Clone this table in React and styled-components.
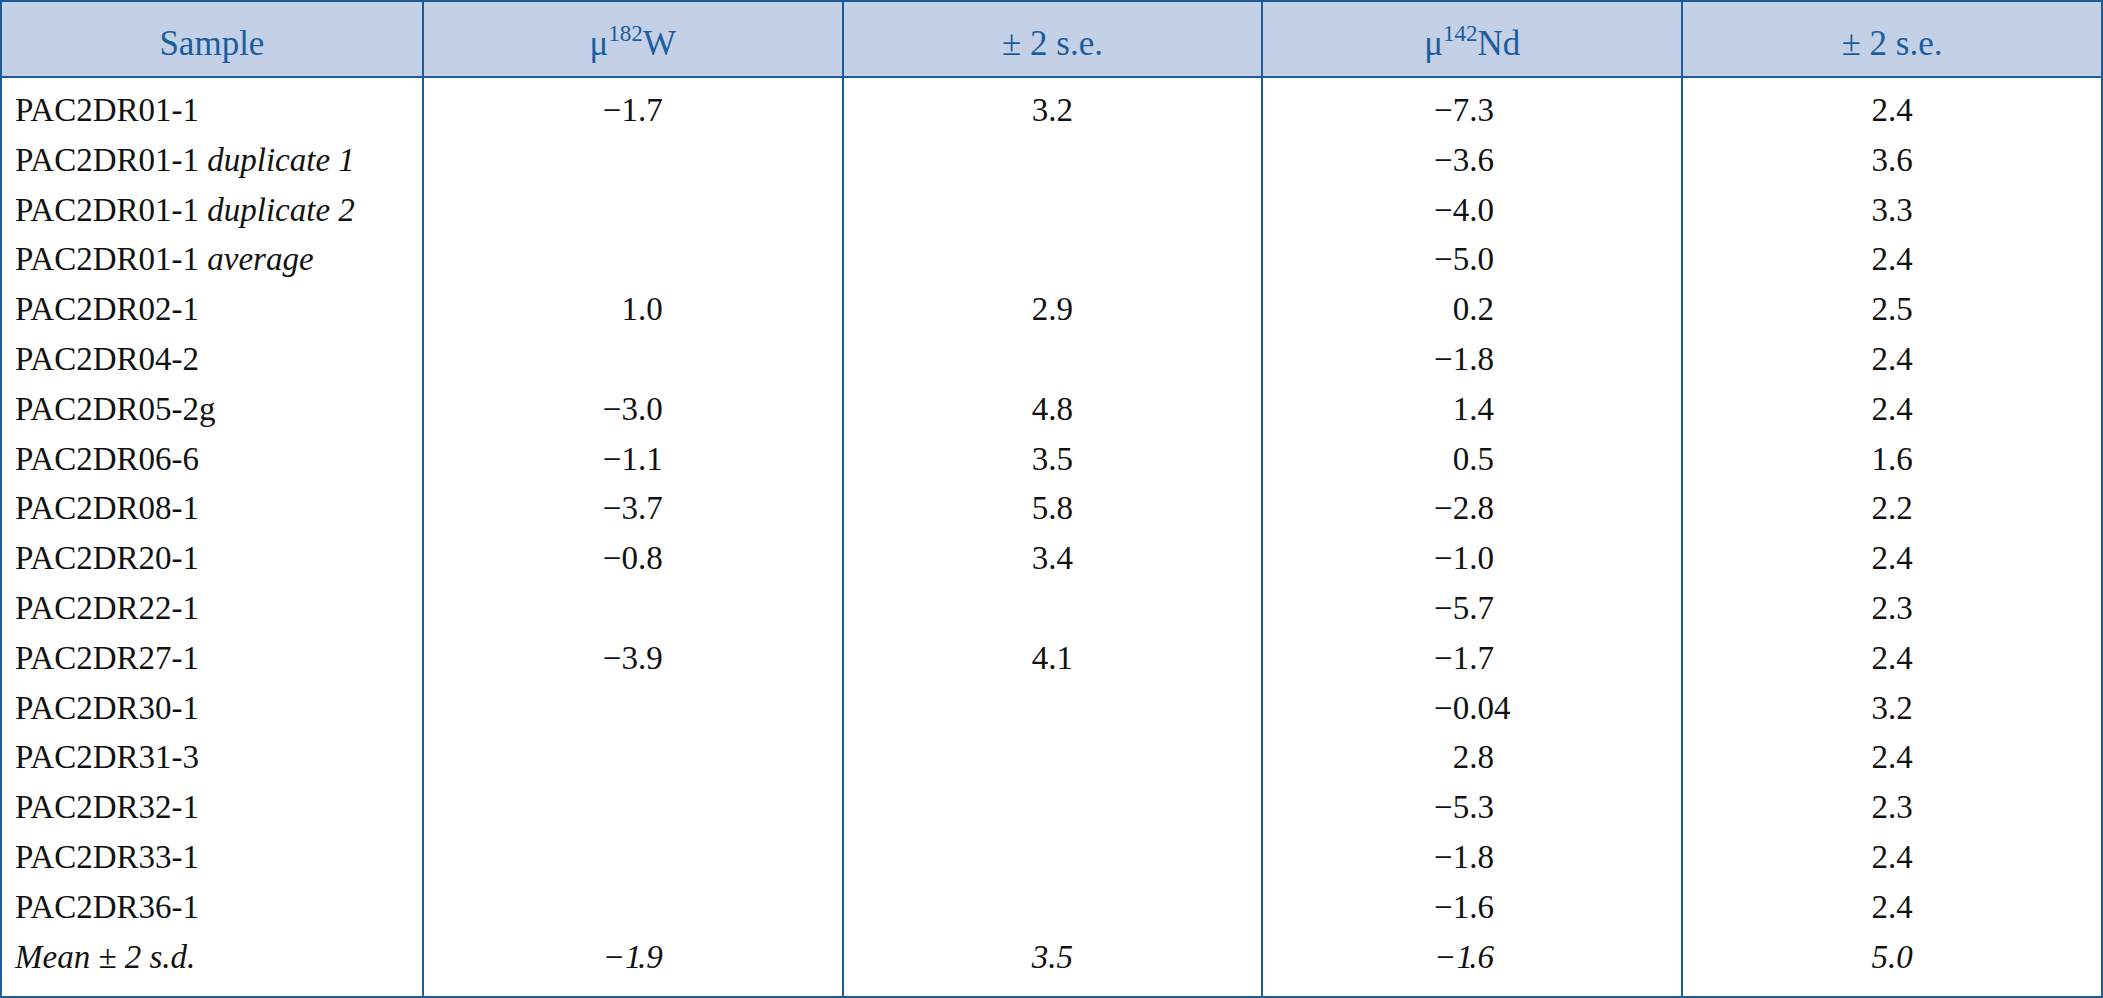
import React from "react";
import styled, { createGlobalStyle } from "styled-components";

const GlobalStyle = createGlobalStyle`
  html, body {
    margin: 0;
    padding: 0;
    background: #ffffff;
  }
  * {
    box-sizing: border-box;
  }
`;

// decimal-aligned columns: widths of the integer part and the fraction part (em)
const columns = [
  { key: "w", int: 1.064, frac: 0.75 },
  { key: "wse", int: 0.5, frac: 0.75 },
  { key: "nd", int: 1.064, frac: 1.25 },
  { key: "ndse", int: 0.5, frac: 0.75 },
];

const rows = [
  { name: "PAC2DR01-1", values: ["−1.7", "3.2", "−7.3", "2.4"] },
  { name: "PAC2DR01-1", note: "duplicate 1", values: ["", "", "−3.6", "3.6"] },
  { name: "PAC2DR01-1", note: "duplicate 2", values: ["", "", "−4.0", "3.3"] },
  { name: "PAC2DR01-1", note: "average", values: ["", "", "−5.0", "2.4"] },
  { name: "PAC2DR02-1", values: ["1.0", "2.9", "0.2", "2.5"] },
  { name: "PAC2DR04-2", values: ["", "", "−1.8", "2.4"] },
  { name: "PAC2DR05-2g", values: ["−3.0", "4.8", "1.4", "2.4"] },
  { name: "PAC2DR06-6", values: ["−1.1", "3.5", "0.5", "1.6"] },
  { name: "PAC2DR08-1", values: ["−3.7", "5.8", "−2.8", "2.2"] },
  { name: "PAC2DR20-1", values: ["−0.8", "3.4", "−1.0", "2.4"] },
  { name: "PAC2DR22-1", values: ["", "", "−5.7", "2.3"] },
  { name: "PAC2DR27-1", values: ["−3.9", "4.1", "−1.7", "2.4"] },
  { name: "PAC2DR30-1", values: ["", "", "−0.04", "3.2"] },
  { name: "PAC2DR31-3", values: ["", "", "2.8", "2.4"] },
  { name: "PAC2DR32-1", values: ["", "", "−5.3", "2.3"] },
  { name: "PAC2DR33-1", values: ["", "", "−1.8", "2.4"] },
  { name: "PAC2DR36-1", values: ["", "", "−1.6", "2.4"] },
  { name: "Mean ± 2 s.d.", mean: true, values: ["−1.9", "3.5", "−1.6", "5.0"] },
];

const Num = ({ value, col }) => {
  if (!value) return null;
  const dot = value.indexOf(".");
  return (
    <NumWrap>
      <IntPart $w={col.int}>{value.slice(0, dot)}</IntPart>
      <FracPart $w={col.frac}>{value.slice(dot)}</FracPart>
    </NumWrap>
  );
};

const App = () => {
  return (
    <>
      <GlobalStyle />
      <Table>
        <HeadRow>
          <HeadCell>Sample</HeadCell>
          <HeadCell>
            μ<Sup>182</Sup>W
          </HeadCell>
          <HeadCell>± 2 s.e.</HeadCell>
          <HeadCell>
            μ<Sup>142</Sup>Nd
          </HeadCell>
          <HeadCell>± 2 s.e.</HeadCell>
        </HeadRow>
        <Body>
          <Column>
            {rows.map((r, i) => (
              <NameCell key={i} $italic={r.mean}>
                {r.name}
                {r.note && <Note> {r.note}</Note>}
              </NameCell>
            ))}
          </Column>
          {columns.map((col, c) => (
            <Column key={col.key} $line>
              {rows.map((r, i) => (
                <ValueCell key={i} $italic={r.mean}>
                  <Num value={r.values[c]} col={col} />
                </ValueCell>
              ))}
            </Column>
          ))}
        </Body>
      </Table>
    </>
  );
};

export default App;

const Table = styled.div`
  width: 2103px;
  height: 998px;
  border: 2px solid #1d5b99;
  display: flex;
  flex-direction: column;
  font-family: "Liberation Serif", "Times New Roman", serif;
  color: #111;
`;

const HeadRow = styled.div`
  display: grid;
  grid-template-columns: repeat(5, 1fr);
  height: 76px;
  background: #c3d0e6;
  border-bottom: 2px solid #1d5b99;
`;

const HeadCell = styled.div`
  display: flex;
  align-items: center;
  justify-content: center;
  padding-top: 10px;
  font-size: 35px;
  color: #1b5d9d;
  border-left: 2px solid #1d5b99;

  &:first-child {
    border-left: none;
  }
`;

const Sup = styled.span`
  display: inline-block;
  font-size: 0.66em;
  line-height: 1;
  transform: translateY(-0.42em);
`;

const Body = styled.div`
  flex: 1;
  display: grid;
  grid-template-columns: repeat(5, 1fr);
`;

const Column = styled.div`
  display: flex;
  flex-direction: column;
  padding-top: 8px;
  border-left: ${(p) => (p.$line ? "2px solid #1d5b99" : "none")};
`;

const NameCell = styled.div`
  height: 49.8px;
  line-height: 49.8px;
  padding-left: 13px;
  font-size: 33px;
  white-space: nowrap;
  font-style: ${(p) => (p.$italic ? "italic" : "normal")};
`;

const Note = styled.span`
  font-style: italic;
`;

const ValueCell = styled.div`
  height: 49.8px;
  line-height: 49.8px;
  display: flex;
  justify-content: center;
  font-size: 33px;
  font-style: ${(p) => (p.$italic ? "italic" : "normal")};
`;

const NumWrap = styled.span`
  display: inline-flex;
`;

const IntPart = styled.span`
  width: ${(p) => p.$w}em;
  text-align: right;
`;

const FracPart = styled.span`
  width: ${(p) => p.$w}em;
  text-align: left;
`;
